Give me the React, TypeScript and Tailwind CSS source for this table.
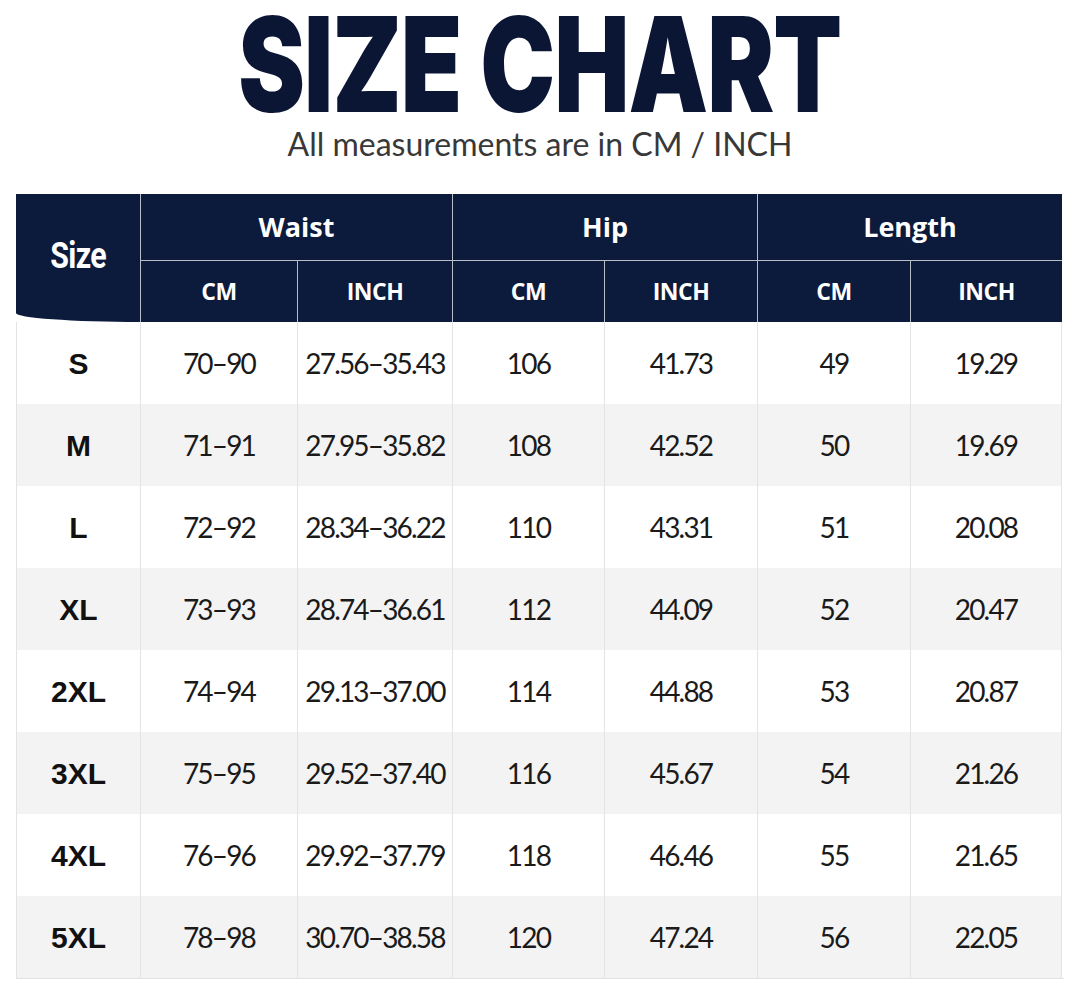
import React from 'react';

const rows = [
  ['S', '70–90', '27.56–35.43', '106', '41.73', '49', '19.29'],
  ['M', '71–91', '27.95–35.82', '108', '42.52', '50', '19.69'],
  ['L', '72–92', '28.34–36.22', '110', '43.31', '51', '20.08'],
  ['XL', '73–93', '28.74–36.61', '112', '44.09', '52', '20.47'],
  ['2XL', '74–94', '29.13–37.00', '114', '44.88', '53', '20.87'],
  ['3XL', '75–95', '29.52–37.40', '116', '45.67', '54', '21.26'],
  ['4XL', '76–96', '29.92–37.79', '118', '46.46', '55', '21.65'],
  ['5XL', '78–98', '30.70–38.58', '120', '47.24', '56', '22.05'],
];

const groups = ['Waist', 'Hip', 'Length'];

export default function App() {
  return (
    <div className="h-[991px] w-[1080px] overflow-hidden bg-white font-['Lato',sans-serif]">
      <header className="flex flex-col items-center pt-[2px]">
        <h1 className="scale-x-[0.76] whitespace-nowrap font-['Inter',sans-serif] text-[132px] font-black leading-[0.94] tracking-[-0.01em] text-[#0b1635]">
          SIZE CHART
        </h1>
        <p className="mt-[1px] text-[32px] leading-[34px] text-[#383838]">All measurements are in CM / INCH</p>
      </header>

      <div className="mx-[16px] mt-[33px] grid grid-cols-[124px_157px_155px_152px_153px_153px_152px] border-b border-[#e2e2e2]">
        <div className="row-span-2 flex h-[128px] items-center justify-center rounded-bl-[100%_9px] bg-[#0c1a3c]">
          <span className="mt-[-4px] inline-block scale-x-[0.82] font-['Roboto',sans-serif] text-[37px] font-bold tracking-[-0.02em] text-white">
            Size
          </span>
        </div>
        {groups.map((g) => (
          <div
            key={g}
            className="col-span-2 flex h-[67px] items-center justify-center border-b border-l border-[#b9bdc8] bg-[#0c1a3c] font-['Open_Sans',sans-serif] text-[27px] font-bold text-white"
          >
            {g}
          </div>
        ))}
        {groups.map((g) =>
          ['CM', 'INCH'].map((u) => (
            <div
              key={g + u}
              className="flex h-[61px] items-center justify-center border-l border-[#b9bdc8] bg-[#0c1a3c] font-['Open_Sans',sans-serif] text-[23px] font-bold tracking-[-0.02em] text-white"
            >
              {u}
            </div>
          )),
        )}

        {rows.map((r, i) =>
          r.map((v, j) => (
            <div
              key={i + '-' + j}
              className={
                'flex h-[82px] items-center justify-center border-l border-[#e4e4e4] ' +
                (j === 6 ? 'border-r ' : '') +
                (i % 2 === 1 ? 'bg-[#f3f3f3] ' : 'bg-white ') +
                (j === 0
                  ? "font-['Liberation_Sans',sans-serif] text-[30px] font-bold text-[#111]"
                  : 'text-[28px] tracking-[-0.065em] text-[#1a1a1a]')
              }
            >
              {v}
            </div>
          )),
        )}
      </div>
    </div>
  );
}
